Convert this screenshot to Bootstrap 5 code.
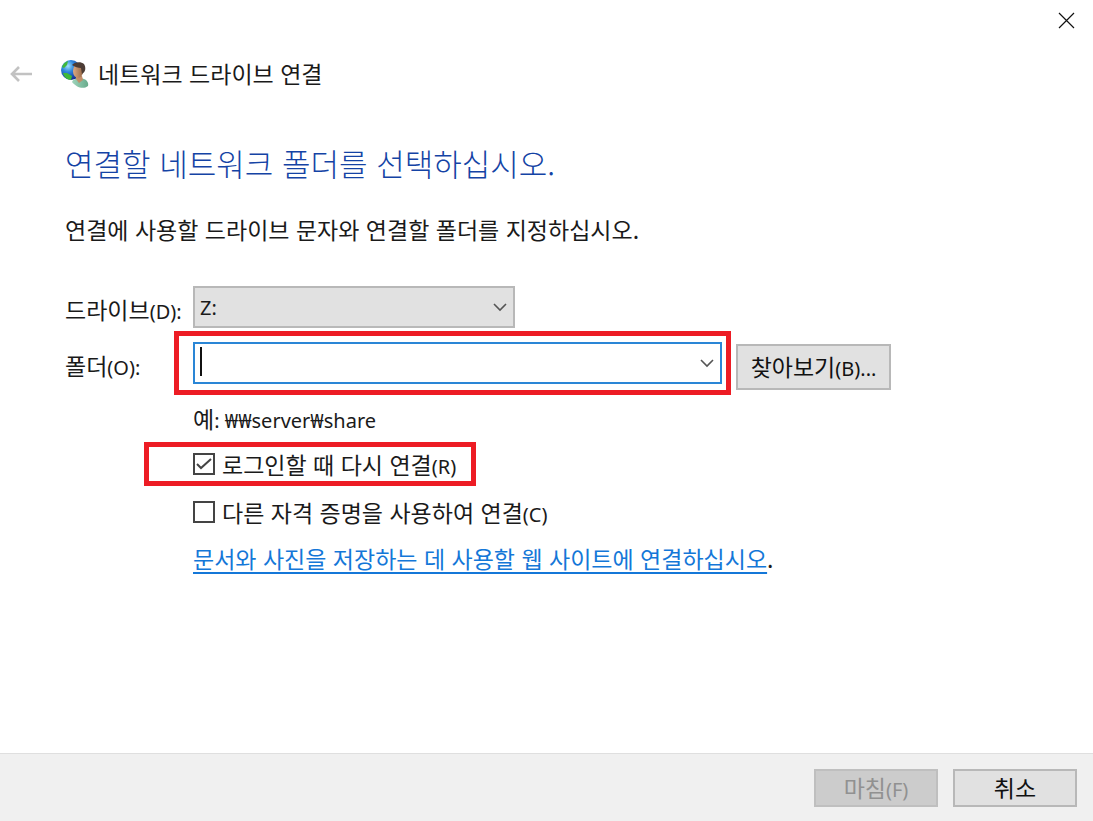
<!DOCTYPE html>
<html lang="ko">
<head>
<meta charset="utf-8">
<meta name="viewport" content="width=device-width, initial-scale=1">
<title>네트워크 드라이브 연결</title>
<link href="https://cdn.jsdelivr.net/npm/bootstrap@5.3.0/dist/css/bootstrap.min.css" rel="stylesheet">
<style>
  body { font-family: "Noto Sans CJK KR", sans-serif; font-size: 23px; line-height: 32px; color: #1a1a1a; background: #fff; }
  .latin { font-family: "Noto Sans", "Noto Sans CJK KR", sans-serif; font-size: 20px; line-height: 20px; }
  .top-strip { height: 40px; padding-right: 18px; }
  .plain-btn { border: 0; background: none; padding: 0; line-height: 0; }
  .title-row { height: 68px; padding-left: 10px; }
  .title-row h1 { font-size: 23px; line-height: 32px; font-weight: 400; padding-bottom: 2px; }
  .app-icon { margin-left: 27px; margin-right: 9px; }
  .content { padding: 35px 65px 0; }
  .content h2 { font-size: 31px; line-height: 40px; font-weight: 300; color: #1443a5; margin-bottom: 30px; }
  .intro { margin-bottom: 41px; }
  .form-grid { display: grid; grid-template-columns: 128px minmax(0, 1fr); }
  .form-grid label { padding-top: 7px; }
  .drive-row { margin-bottom: 14px; }
  .drive-wrap { width: 322px; }
  .folder-wrap { width: 529px; }
  .win-field { height: 42px; border-radius: 0; font-family: "Noto Sans", "Noto Sans CJK KR", sans-serif; font-size: 20px; line-height: 28px; padding: 5px 36px 3px 5px; color: #1a1a1a; }
  select.win-field { background: #e1e1e1; border: 2px solid #b8b8b8; }
  input.win-field, input.win-field:focus { background: #fff; border: 2px solid #2a86d6; box-shadow: none; }
  .chevron { position: absolute; right: 7px; top: 16px; pointer-events: none; }
  .caret-bar { position: absolute; left: 7px; top: 5px; width: 2px; height: 29px; background: #111; }
  .callout { position: relative; }
  .callout::before { content: ""; position: absolute; border: 5px solid #ed1c24; pointer-events: none; }
  .callout-folder::before { inset: -11px -9px -11px -19px; }
  .callout-login::before { inset: -6px -20px -6px -49px; }
  .win-btn { border-radius: 0; border: 2px solid #b8b8b8; background: #e1e1e1; color: #111; font-size: 23px; line-height: 30px; padding: 0 0 2px; }
  .browse { width: 155px; height: 46px; margin: 2px 0 0 14px; }
  .dlg-btn { width: 124px; height: 38px; }
  .win-btn:disabled { background: #ccc; border-color: #bfbfbf; color: #919191; opacity: 1; }
  .options { padding: 12px 0 0 128px; gap: 16px; }
  .example { margin-bottom: -2px; }
  .tick { appearance: none; width: 22px; height: 22px; margin: 0 7px 0 0; border: 2px solid #444; background: #fff; flex: none; }
  .tick:checked { background: #fff url("data:image/svg+xml,%3Csvg xmlns='http://www.w3.org/2000/svg' viewBox='0 0 18 18'%3E%3Cpath d='M2 9l4 4L16 4' fill='none' stroke='%23444' stroke-width='2'/%3E%3C/svg%3E") center/18px no-repeat; }
  .site-link { color: #1477d8; text-decoration: underline 2px; text-underline-offset: 4px; text-decoration-skip-ink: none; }
  .site-row { margin-top: -2px; }
  .dlg-footer { background: #f0f0f0; border-top: 1px solid #dfdfdf; padding: 15px 16px 14px; gap: 15px; }
</style>
</head>
<body>
<div class="d-flex flex-column min-vh-100">
  <div class="top-strip d-flex justify-content-end align-items-center">
    <button class="plain-btn" type="button" aria-label="닫기">
      <svg width="17" height="17" viewBox="0 0 17 17" fill="none" stroke="#111" stroke-width="1.2"><path d="M1 1l15 15M16 1L1 16"/></svg>
    </button>
  </div>
  <header class="title-row d-flex align-items-center">
    <button class="plain-btn" type="button" aria-label="뒤로">
      <svg width="23" height="18" viewBox="0 0 23 18" fill="none" stroke="#c2c2c2" stroke-width="2.6"><path d="M22 9H2M9 2L2 9l7 7"/></svg>
    </button>
    <svg class="app-icon" width="29" height="30" viewBox="0 0 29 30" aria-hidden="true">
      <defs>
        <radialGradient id="globe" cx=".35" cy=".3" r=".75"><stop offset="0" stop-color="#9fe0fb"/><stop offset=".4" stop-color="#2d86dd"/><stop offset="1" stop-color="#10258c"/></radialGradient>
        <linearGradient id="skin"><stop offset="0" stop-color="#dda983"/><stop offset="1" stop-color="#976846"/></linearGradient>
        <linearGradient id="shirt"><stop offset="0" stop-color="#a0d4bb"/><stop offset="1" stop-color="#68ab8c"/></linearGradient>
      </defs>
      <circle cx="11" cy="11" r="10" fill="url(#globe)"/>
      <path d="M2 8c1-3 3-5 6-6l-1 4-3 3zM3 14l4 0 5 3-1 4c-4 0-7-3-8-7z" fill="#3fb83a"/>
      <path d="M12 23c1-3 5-4 9-4 5 1 8 4 7 8-5 4-12 1-16-4z" fill="url(#shirt)"/>
      <path d="M16 17l6 0 1 4-4 3-3-4z" fill="#c28e69"/>
      <ellipse cx="18" cy="12" rx="5" ry="7" fill="url(#skin)"/>
      <path d="M12 6c2-3 9-4 12-1 2 3 2 8-2 10l-1-6c-3 0-6-1-9-3z" fill="#4c3c35"/>
    </svg>
    <h1 class="mb-0">네트워크 드라이브 연결</h1>
  </header>
  <main class="content flex-grow-1">
    <h2>연결할 네트워크 폴더를 선택하십시오.</h2>
    <p class="intro">연결에 사용할 드라이브 문자와 연결할 폴더를 지정하십시오.</p>
    <form id="drive-form">
      <div class="form-grid drive-row">
        <label for="drive">드라이브<span class="latin">(D):</span></label>
        <div class="drive-wrap position-relative">
          <select id="drive" class="form-select win-field"><option>Z:</option></select>
          <svg class="chevron" width="16" height="12" viewBox="0 0 16 12" fill="none" stroke="#555" stroke-width="1.6"><path d="M2 2l6 6 6-6"/></svg>
        </div>
      </div>
      <div class="form-grid">
        <label for="folder">폴더<span class="latin">(O):</span></label>
        <div class="d-flex align-items-start">
          <div class="folder-wrap callout callout-folder">
            <input id="folder" type="text" class="form-control win-field">
            <span class="caret-bar"></span>
            <svg class="chevron" width="16" height="12" viewBox="0 0 16 12" fill="none" stroke="#555" stroke-width="1.6"><path d="M2 2l6 6 6-6"/></svg>
          </div>
          <button type="button" class="btn win-btn browse">찾아보기<span class="latin">(B)...</span></button>
        </div>
      </div>
      <div class="options d-flex flex-column align-items-start">
        <div class="example">예<span class="latin">: ₩₩server₩share</span></div>
        <div class="callout callout-login d-flex align-items-center">
          <input id="reconnect" type="checkbox" class="tick" checked>
          <label for="reconnect">로그인할 때 다시 연결<span class="latin">(R)</span></label>
        </div>
        <div class="d-flex align-items-center">
          <input id="creds" type="checkbox" class="tick">
          <label for="creds">다른 자격 증명을 사용하여 연결<span class="latin">(C)</span></label>
        </div>
        <div class="site-row"><a href="#" class="site-link">문서와 사진을 저장하는 데 사용할 웹 사이트에 연결하십시오</a>.</div>
      </div>
    </form>
  </main>
  <footer class="dlg-footer d-flex justify-content-end">
    <button type="submit" form="drive-form" class="btn win-btn dlg-btn" disabled>마침<span class="latin">(F)</span></button>
    <button type="button" class="btn win-btn dlg-btn">취소</button>
  </footer>
</div>
<script src="https://cdn.jsdelivr.net/npm/bootstrap@5.3.0/dist/js/bootstrap.bundle.min.js"></script>
</body>
</html>
